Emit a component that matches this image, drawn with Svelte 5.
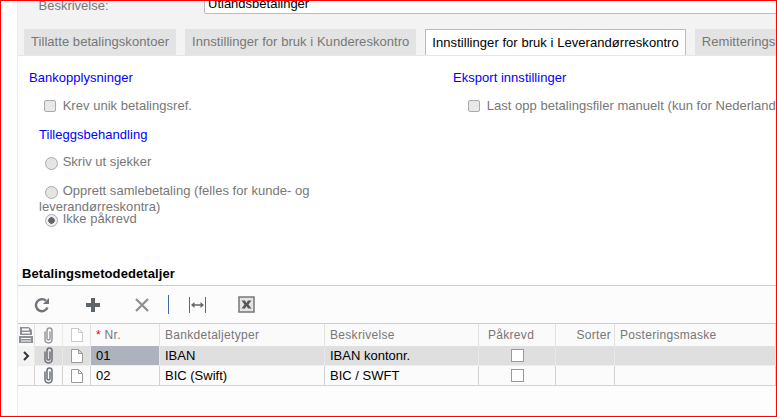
<script>
  const rows = [
    { nr: '01', type: 'IBAN', desc: 'IBAN kontonr.', active: true },
    { nr: '02', type: 'BIC (Swift)', desc: 'BIC / SWFT', active: false }
  ];
  const tabs = [
    'Tillatte betalingskontoer',
    'Innstillinger for bruk i Kundereskontro',
    'Innstillinger for bruk i Leverandørreskontro',
    'Remitteringsinnstillinger'
  ];
</script>

{#snippet clip()}
  <svg width="11" height="17" viewBox="0 0 11 17" fill="none" stroke="#6c7278" stroke-width="1.5">
    <path d="M2 4.500v8c0 4.500 7 4.500 7 0V3.500C9 0 4 0 4 3.500V11.500c0 2 3 2 3 0V4.500" />
  </svg>
{/snippet}

{#snippet note(color)}
  <svg width="12" height="14" viewBox="0 0 12 14" fill="#fff" stroke={color}>
    <path d="M.5.5h7l4 4v9H.5zM7.5.5v4h4" />
  </svg>
{/snippet}

<div class="page">
  <div class="rail"></div>
  <main>
    <div class="head">
      <div class="field">
        <label for="desc"><span class="star">*</span>&nbsp; Beskrivelse:</label>
        <input id="desc" value="Utlandsbetalinger" readonly />
      </div>
      <nav class="tabs">
        {#each tabs as tab, i}
          <span class="tab" class:current={i === 2}>{tab}</span>
        {/each}
      </nav>
    </div>

    <section class="form">
      <div class="col left">
        <h3>Bankopplysninger</h3>
        <label class="opt check"><input type="checkbox" disabled /> Krev unik betalingsref.</label>
        <h3 class="sub">Tilleggsbehandling</h3>
        <div class="radios">
          <div class="radio r1"><input type="radio" disabled /> Skriv ut sjekker</div>
          <div class="radio r2"><input type="radio" disabled /> Opprett samlebetaling (felles for kunde- og leverandørreskontra)</div>
          <div class="radio r3"><input type="radio" disabled checked /> Ikke påkrevd</div>
        </div>
      </div>
      <div class="col right">
        <h3>Eksport innstillinger</h3>
        <label class="opt check"><input type="checkbox" disabled /> Last opp betalingsfiler manuelt (kun for Nederland)</label>
      </div>
    </section>

    <h2>Betalingsmetodedetaljer</h2>
    <div class="toolbar">
      <svg class="t-refresh" width="16" height="16" viewBox="0 0 16 16" fill="none" stroke="#6f7479" stroke-width="2.400">
        <path d="M13.500 10.500A6 6 0 1 1 12 3.700" />
        <path d="M15 1v6H9z" fill="#6f7479" stroke="none" />
      </svg>
      <svg class="t-plus" width="16" height="16" viewBox="0 0 16 16" fill="#5f6469">
        <path d="M6 1h4v5h5v4h-5v5H6v-5H1V6h5z" />
      </svg>
      <svg class="t-x" width="16" height="16" viewBox="0 0 16 16" stroke="#8b8f94" stroke-width="2.200">
        <path d="M2 2l12 12M14 2L2 14" />
      </svg>
      <span class="sep"></span>
      <svg class="t-fit" width="19" height="16" viewBox="0 0 19 16" fill="none" stroke="#666">
        <path d="M1.500 0v16M17.500 0v16" />
        <path d="M4 8h11" stroke-width="1.500" />
        <path d="M3 8l3.500-3v6zM16 8l-3.500-3v6z" fill="#666" stroke="none" />
      </svg>
      <svg class="t-xl" width="17" height="17" viewBox="0 0 17 17">
        <rect x="1" y="1" width="15" height="15" fill="#e4e4e4" stroke="#777" stroke-width="1.500" />
        <path d="M3.500 4.500h3.500l1.500 2.500L10 4.500h3.500L10.500 8.500l3 4H10L8.500 10 7 12.500H3.500l3-4z" fill="#555" />
      </svg>
    </div>

    <div class="grid">
      <div class="hd ic">
        <svg width="14" height="16" viewBox="0 0 14 16" fill="#8d9196">
          <path d="M1 0h9l3 3v5H1zM3 1.500v2h7v-2zM3 5v1.500h8V5zM0 9h14v7H0zM2 11v1h10v-1zM2 13.500v1h10v-1z" fill-rule="evenodd" />
        </svg>
      </div>
      <div class="hd ic dim">{@render clip()}</div>
      <div class="hd ic">{@render note('#c9c9c9')}</div>
      <div class="hd txt"><span class="star">*</span>&nbsp;Nr.</div>
      <div class="hd txt">Bankdetaljetyper</div>
      <div class="hd txt">Beskrivelse</div>
      <div class="hd req">Påkrevd</div>
      <div class="hd end">Sorter</div>
      <div class="hd txt">Posteringsmaske</div>

      {#each rows as row}
        <div class="cell ic side" class:on={row.active}>
          {#if row.active}
            <svg width="7" height="10" viewBox="0 0 7 10" fill="none" stroke="#333" stroke-width="2"><path d="M1 1l4 4-4 4" /></svg>
          {/if}
        </div>
        <div class="cell ic" class:on={row.active}>{@render clip()}</div>
        <div class="cell ic" class:on={row.active}>{@render note('#9a9a9a')}</div>
        <div class="cell txt" class:on={row.active} class:sel={row.active}>{row.nr}</div>
        <div class="cell txt" class:on={row.active}>{row.type}</div>
        <div class="cell txt" class:on={row.active}>{row.desc}</div>
        <div class="cell ic" class:on={row.active}><span class="box"></span></div>
        <div class="cell" class:on={row.active}></div>
        <div class="cell" class:on={row.active}></div>
      {/each}
    </div>
  </main>
</div>

<style>
  :global(body) {
    margin: 0;
    background: #fff;
  }

  .page {
    box-sizing: border-box;
    width: 777px;
    height: 417px;
    display: flex;
    border: 1px solid #f00;
    overflow: hidden;
    background: #fff;
    font-family: 'Liberation Sans', Arial, sans-serif;
    font-size: 13px;
    color: #000;
  }

  .rail {
    flex: none;
    width: 16px;
    border-right: 1px solid #ececec;
  }

  main {
    flex: 1;
    min-width: 0;
    display: flex;
    flex-direction: column;
  }

  .head {
    height: 54px;
    background: #f3f3f3;
    border-bottom: 1px solid #e6e6e6;
    overflow: hidden;
  }

  .field {
    display: flex;
    align-items: flex-end;
    height: 13px;
    padding-left: 10px;
  }
  .field label {
    flex: none;
    width: 176px;
    margin-bottom: 2px;
    color: #777;
    line-height: 13px;
    white-space: nowrap;
  }
  .field .star {
    vertical-align: 5px;
    margin-right: -1px;
    font-size: 11px;
    color: #b09090;
  }
  .field input {
    box-sizing: border-box;
    flex: none;
    width: 600px;
    height: 24px;
    margin: -11px 0 0;
    padding: 3px 3px 0;
    border: 1px solid #bbb;
    border-radius: 2px;
    background: #fff;
    font: inherit;
    color: #000;
  }

  .star {
    color: #e00;
  }

  .tabs {
    display: flex;
    gap: 9px;
    margin-top: 15px;
    padding-left: 6px;
    white-space: nowrap;
    letter-spacing: 0.05px;
  }
  .tab {
    box-sizing: border-box;
    height: 26px;
    line-height: 26px;
    padding: 0 7px;
    background: #e3e3e3;
    color: #777;
  }
  .tab.current {
    background: #fff;
    color: #000;
    border: 1px solid #bbb;
    border-bottom: 0;
    height: 27px;
    line-height: 25px;
    padding: 0 6px;
  }

  .form {
    flex: none;
    height: 206px;
    display: flex;
    color: #777;
    letter-spacing: 0.03px;
  }
  .col {
    flex: none;
  }
  .left {
    width: 424px;
    padding-left: 11px;
  }
  .right {
    white-space: nowrap;
  }
  h3 {
    margin: 14px 0 0;
    font-size: 13px;
    font-weight: 400;
    line-height: 16px;
    color: #00f;
  }
  .sub {
    margin-top: 13px;
    margin-left: 10px;
  }
  .opt {
    display: block;
    margin: 12px 0 0 15px;
    line-height: 16px;
  }
  .check input {
    appearance: none;
    box-sizing: border-box;
    width: 12px;
    height: 12px;
    margin: 0 3px 0 0;
    vertical-align: -2px;
    border: 1px solid #aaa;
    border-radius: 2px;
    background: #e8e8e8;
  }
  .radios {
    width: 300px;
    margin-left: 10px;
    line-height: 16px;
  }
  .radio input {
    appearance: none;
    box-sizing: border-box;
    width: 13px;
    height: 13px;
    margin: 0 1px 0 6px;
    vertical-align: -4px;
    border: 1px solid #aaa;
    border-radius: 50%;
    background: #e4e4e4;
  }
  .radio input:checked {
    background: radial-gradient(circle, #666 0 3px, #eee 3.500px);
  }
  .r1 { margin-top: 11px; }
  .r2 { margin-top: 13px; }
  .r3 { margin-top: -4px; }

  h2 {
    flex: none;
    box-sizing: border-box;
    height: 24px;
    margin: 0;
    padding-left: 4px;
    line-height: 24px;
    font-size: 13px;
    font-weight: 700;
    letter-spacing: 0.08px;
    color: #000;
    border-bottom: 1px solid #ccc;
  }

  .toolbar {
    flex: none;
    height: 37px;
    display: flex;
    align-items: center;
    padding-left: 16px;
    background: #fcfcfc;
  }
  .t-plus { margin-left: 35px; }
  .t-x { margin-left: 33px; }
  .sep {
    width: 1px;
    height: 19px;
    margin-left: 18px;
    background: #3d6a9e;
  }
  .t-fit { margin-left: 19px; }
  .t-xl { margin-left: 31px; }

  .grid {
    display: grid;
    grid-template-columns: 17px 28px 28px 69px 165px 154px 77px 59px 1fr;
    grid-template-rows: 22px 20px 20px;
    align-content: start;
    flex: 1;
    border-top: 1px solid #ccc;
    background: #fdfdfd;
  }
  .hd,
  .cell {
    box-sizing: border-box;
    display: flex;
    align-items: center;
    min-width: 0;
    white-space: nowrap;
    border-right: 1px solid #e2e2e2;
  }
  .hd {
    color: #777;
    font-size: 12px;
    letter-spacing: 0.3px;
    background: #fafafa;
  }
  .cell {
    border-bottom: 1px solid #d2d2d2;
    border-right-color: #d2d2d2;
    background: #fbfbfb;
  }
  .txt { padding-left: 5px; }
  .ic { justify-content: center; }
  .dim { opacity: 0.7; }
  .req { padding-left: 9px; }
  .end { justify-content: flex-end; padding-right: 3px; }
  .cell.on { background: #dfdfdf; border-bottom-color: #eee; border-right-color: #e8e8e8; }
  .cell.side.on { background: #f3f3f3; }
  .cell.sel { background: #aeb2bc; }
  .box {
    box-sizing: border-box;
    width: 13px;
    height: 13px;
    background: #fff;
    border: 1px solid #999;
  }
</style>
